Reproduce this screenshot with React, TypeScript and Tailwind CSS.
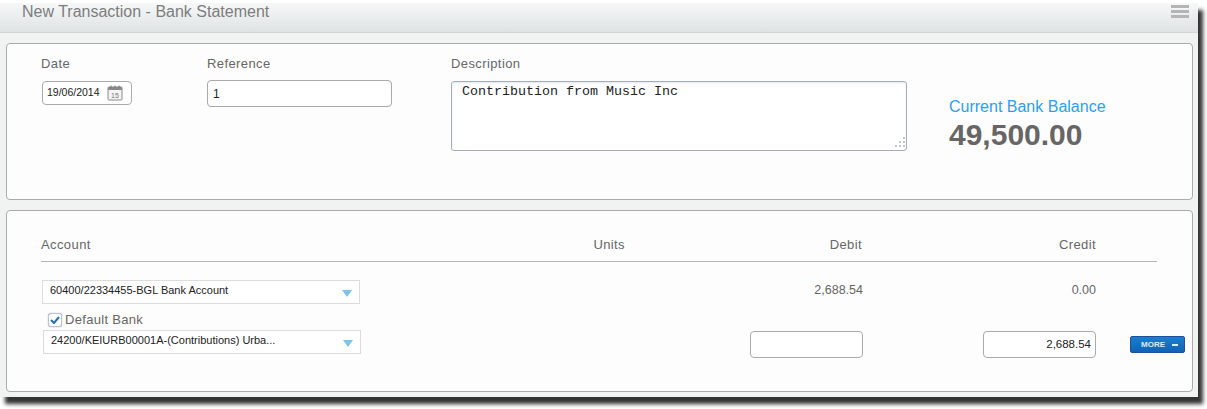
const Arrow = () => (
  <svg width="10" height="7" viewBox="0 0 10 7" className="mt-[3px] shrink-0">
    <path d="M0 0H10L5 7Z" fill="#7cc4e8" />
  </svg>
);

const CalendarIcon = () => (
  <svg width="16" height="16" viewBox="0 0 16 16" className="shrink-0">
    <rect x="1" y="2" width="14" height="13" rx="1" fill="#f4f4f4" stroke="#8a8a8a" />
    <rect x="1" y="2" width="14" height="3" fill="#8a8a8a" />
    <path d="M4 0.5V3M8 0.5V3M12 0.5V3" stroke="#777" strokeWidth="1" />
    <text x="8" y="13" textAnchor="middle" fontSize="7" fill="#777" fontFamily="Liberation Sans">15</text>
  </svg>
);

const AccountSelect = ({ text, className }: { text: string; className: string }) => (
  <div className={`flex h-6 w-[318px] shrink-0 items-center justify-between border border-[#dcdcdc] bg-white pl-[7px] pr-[7px] text-[11px] text-[#222] ${className}`}>
    <span className="-mt-[4px]">{text}</span>
    <Arrow />
  </div>
);

export default function App() {
  return (
    <div className="h-[409px] w-[1207px] overflow-hidden bg-white pt-[3px] font-['Liberation_Sans',sans-serif]">
      <div className="h-[394px] w-[1198px] bg-[#f1f3f3] shadow-[5px_7px_4px_#333]">
        {/* Header */}
        <header className="flex h-[30px] items-start justify-between border-b border-[#d4d6d6] bg-gradient-to-b from-[#f6f8f8] to-[#dfe3e4] pl-[22px] pr-[9px]">
          <h1 className="text-[16px] leading-[18px] text-[#7d7d7d]">New Transaction - Bank Statement</h1>
          <div className="mt-[2px] flex w-[18px] flex-col gap-[2px]">
            <div className="h-[3px] bg-[#b5b5b5]" />
            <div className="h-[3px] bg-[#b5b5b5]" />
            <div className="h-[3px] bg-[#b5b5b5]" />
          </div>
        </header>

        {/* Top panel */}
        <section className="mx-[6px] mt-[10px] flex h-[157px] w-[1187px] rounded-[4px] border border-[#ababab] bg-[#fdfdfd] pl-[34px] pt-[13px]">
          <div className="w-[166px]">
            <label className="block text-[13px] leading-[14px] tracking-[0.4px] text-[#666]">Date</label>
            <div className="ml-px mt-[10px] flex h-6 w-[90px] items-center justify-between rounded-[4px] border border-[#aaa] bg-white pl-[4px] pr-[8px] text-[10.5px] text-[#222]">
              19/06/2014
              <CalendarIcon />
            </div>
          </div>
          <div className="w-[244px]">
            <label className="block text-[13px] leading-[14px] tracking-[0.4px] text-[#666]">Reference</label>
            <div className="mt-[9px] flex h-[27px] w-[185px] items-center rounded-[4px] border border-[#aaa] bg-white pl-[5px] text-[12px] text-[#222]">1</div>
          </div>
          <div className="w-[498px]">
            <label className="block text-[13px] leading-[14px] tracking-[0.4px] text-[#666]">Description</label>
            <div className="relative mt-[10px] h-[70px] w-[456px] rounded-[3px] border border-[#a5adb8] bg-white pl-[10px] pt-[2px] font-['Liberation_Mono',monospace] text-[13.33px] leading-[15px] text-[#222] shadow-[inset_0_1px_2px_#dfe6f2]">
              Contribution from Music Inc
              <svg width="14" height="14" viewBox="0 0 14 14" className="absolute bottom-0 right-0">
                <path d="M11 1h2v2h-2zM7 5h2v2H7zM11 5h2v2h-2zM3 9h2v2H3zM7 9h2v2H7zM11 9h2v2h-2z" fill="#c4c4c4" />
              </svg>
            </div>
          </div>
          <div className="pt-[41px]">
            <div className="text-[16px] leading-[18px] text-[#2b9df4]">Current Bank Balance</div>
            <div className="mt-[1px] text-[30px] font-bold leading-[36px] text-[#666]">49,500.00</div>
          </div>
        </section>

        {/* Bottom panel */}
        <section className="mx-[6px] mt-[10px] h-[182px] w-[1187px] rounded-[4px] border border-[#ababab] bg-[#fdfdfd] pl-[34px] pr-[35px] pt-[27px]">
          <div className="flex h-[24px] border-b border-[#b5b5b5] text-[13px] leading-[14px] tracking-[0.4px] text-[#666]">
            <div className="w-[503px]">Account</div>
            <div className="w-[81px] text-right">Units</div>
            <div className="w-[237px] text-right">Debit</div>
            <div className="w-[234px] text-right">Credit</div>
          </div>
          <div className="mt-[18px] flex h-6 items-start text-[12.5px] leading-[20px] text-[#666]">
            <AccountSelect text="60400/22334455-BGL Bank Account" className="ml-px" />
            <div className="ml-[503px] flex w-0 justify-end"><span>2,688.54</span></div>
            <div className="ml-[233px] flex w-0 justify-end"><span>0.00</span></div>
          </div>
          <div className="ml-[7px] mt-[5px] flex h-[21px] items-center gap-[3px] text-[13px] tracking-[0.3px] text-[#666]">
            <span className="flex h-[14px] w-[14px] items-center justify-center rounded-[3px] border border-[#b8c4d0] bg-white shadow-[0_0_1px_#88a]">
              <svg width="10" height="8" viewBox="0 0 10 8"><path d="M1 4l3 3 5-6" fill="none" stroke="#1f6fb5" strokeWidth="2" /></svg>
            </span>
            Default Bank
          </div>
          <div className="flex items-start">
            <AccountSelect text="24200/KEIURB00001A-(Contributions) Urba..." className="ml-[2px]" />
            <div className="ml-[389px] mt-px h-[27px] w-[113px] shrink-0 rounded-[4px] border border-[#aaa] bg-white" />
            <div className="ml-[120px] mt-px flex h-[27px] w-[113px] shrink-0 items-center justify-end rounded-[4px] border border-[#aaa] bg-white pr-[4px] text-[11.5px] text-[#222]">2,688.54</div>
            <div className="ml-[34px] mt-[6px] flex h-[17px] w-[55px] shrink-0 items-center gap-[7px] rounded-[2px] border border-[#1c4f9c] bg-gradient-to-b from-[#1b7fd0] to-[#0f63b5] pl-[10px] text-[8px] font-bold text-[#dcebf8]">
              MORE
              <span className="h-[2px] w-[6px] bg-[#dcebf8]" />
            </div>
          </div>
        </section>
      </div>
    </div>
  );
}
